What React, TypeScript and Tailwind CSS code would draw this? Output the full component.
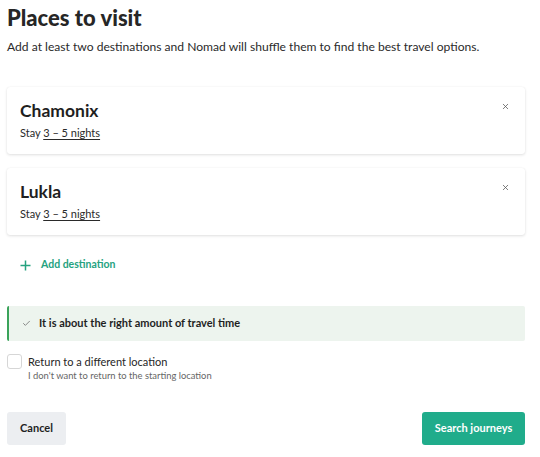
import { X, Check } from "lucide-react";

function DestinationCard({ name }: { name: string }) {
  return (
    <div className="flex items-start justify-between rounded-[3px] bg-white pl-[13px] pr-[15px] pt-[12px] pb-[14px] shadow-[0_1px_3px_rgba(0,0,0,0.12),0_0_1px_rgba(0,0,0,0.08)]">
      <div>
        <div className="text-[17.5px] font-bold leading-[24px] text-[#1f1f1f]">{name}</div>
        <div className="mt-[3px] text-[11px] leading-[14px] text-[#2a2a2a]">
          Stay <span className="underline underline-offset-2">3 – 5 nights</span>
        </div>
      </div>
      <X className="mt-[3px] h-[9px] w-[9px] text-[#555]" strokeWidth={2} />
    </div>
  );
}

export default function App() {
  return (
    <div className="min-h-screen bg-white font-['Lato',sans-serif] text-[#222]">
      <div className="w-[525px] pl-[7px] pt-[2px]">
        {/* Title */}
        <h1 className="text-[22px] font-black leading-[32px] text-[#262626]">Places to visit</h1>
        <p className="mt-[5px] text-[12.1px] leading-[16px] text-[#2a2a2a]">
          Add at least two destinations and Nomad will shuffle them to find the best travel options.
        </p>

        {/* Destinations */}
        <div className="mt-[32px] flex flex-col gap-[14px]">
          <DestinationCard name="Chamonix" />
          <DestinationCard name="Lukla" />
        </div>

        <button className="mt-[23px] flex h-[14px] items-center gap-[10px] pl-[13px] text-[10.5px] font-bold text-[#25a27f]">
          <svg width="11" height="11" viewBox="0 0 11 11" fill="none">
            <path d="M5.5 0.5v10M0.5 5.5h10" stroke="#25a27f" strokeWidth="1.5" />
          </svg>
          Add destination
        </button>

        {/* Alert */}
        <div className="mt-[34px] flex h-[35px] items-center gap-[8px] rounded-[2px] border-l-[2px] border-[#3aa35a] bg-[#edf4ee] pl-[13px]">
          <Check className="h-[9px] w-[9px] text-[#666]" strokeWidth={2} />
          <span className="text-[11px] font-bold text-[#1f1f1f]">It is about the right amount of travel time</span>
        </div>

        {/* Checkbox */}
        <label className="mt-[13px] flex items-start gap-[6px]">
          <span className="h-[15px] w-[15px] shrink-0 rounded-[3px] border border-[#d6d6d6] bg-white" />
          <span className="flex flex-col">
            <span className="text-[11px] leading-[16px] text-[#262626]">Return to a different location</span>
            <span className="text-[9.4px] leading-[12px] text-[#666]">I don't want to return to the starting location</span>
          </span>
        </label>

        {/* Actions */}
        <div className="mt-[30px] flex items-center justify-between">
          <button className="h-[33px] w-[59px] rounded-[3px] bg-[#eceef1] text-[11px] font-bold text-[#1f1f1f]">
            Cancel
          </button>
          <button className="h-[33px] w-[103px] rounded-[3px] bg-[#20ac8b] text-[11px] font-bold text-white">
            Search journeys
          </button>
        </div>
      </div>
    </div>
  );
}
